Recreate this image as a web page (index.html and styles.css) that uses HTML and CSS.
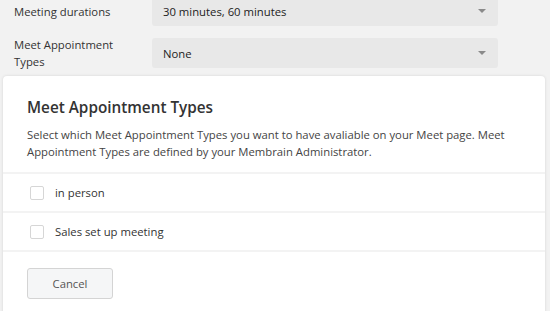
FILE: index.html
```html
<!DOCTYPE html>
<html>
<head>
<meta charset="utf-8">
<link rel="stylesheet" href="styles.css">
</head>
<body>
<div class="form">
  <div class="row">
    <div class="label">Meeting durations</div>
    <div class="select"><span>30 minutes, 60 minutes</span><span class="caret"></span></div>
  </div>
  <div class="row">
    <div class="label">Meet Appointment Types</div>
    <div class="select"><span>None</span><span class="caret"></span></div>
  </div>
</div>
<div class="modal">
  <div class="head">
    <h2 class="title">Meet Appointment Types</h2>
    <p class="desc">Select which Meet Appointment Types you want to have avaliable on your Meet page. Meet Appointment Types are defined by your Membrain Administrator.</p>
  </div>
  <label class="option"><span class="box"></span><span>in person</span></label>
  <label class="option"><span class="box"></span><span>Sales set up meeting</span></label>
  <div class="foot"><button class="btn">Cancel</button></div>
</div>
</body>
</html>
```
FILE: styles.css
```css
html, body {
  margin: 0;
  padding: 0;
  height: 100%;
  overflow: hidden;
}
body {
  background: #f2f2f2;
  font-family: "Open Sans", "Noto Sans", sans-serif;
  font-size: 11.3px;
  color: #333;
}
.form {
  margin-top: -4px;
  display: flex;
  flex-direction: column;
  gap: 10px;
}
.row {
  display: grid;
  grid-template-columns: 152px 346px;
  align-items: center;
}
.label {
  padding-left: 14px;
  width: 110px;
  line-height: 17px;
  color: #333;
}
.select {
  height: 30px;
  background: #e8e8e8;
  border-radius: 3px;
  display: flex;
  align-items: center;
  justify-content: space-between;
  padding: 0 12px 0 11px;
  color: #222;
}
.caret {
  width: 0;
  height: 0;
  border-left: 4px solid transparent;
  border-right: 4px solid transparent;
  border-top: 4px solid #8a8a8a;
}
.modal {
  margin: 6px 5px 0 3px;
  background: #fff;
  border-radius: 4px;
  box-shadow: 0 0 3px rgba(0,0,0,0.12);
  height: 300px;
}
.head {
  padding: 21px 24px 12px 24px;
  border-bottom: 2px solid #f3f3f3;
}
.title {
  margin: 0 0 9px 0;
  font-size: 15.3px;
  line-height: 20px;
  font-weight: 600;
  color: #333;
}
.desc {
  margin: 0;
  line-height: 17px;
  color: #444;
}
.option {
  display: flex;
  align-items: center;
  gap: 11px;
  height: 37px;
  padding-left: 27px;
  border-bottom: 2px solid #f3f3f3;
  color: #333;
}
.box {
  width: 12px;
  height: 12px;
  border: 1px solid #d6d6d6;
  border-radius: 2px;
  background: #fff;
}
.foot {
  padding: 16px 24px;
}
.btn {
  width: 86px;
  height: 31px;
  background: #f5f6f7;
  border: 1px solid #d4d4d4;
  border-radius: 3px;
  font-family: inherit;
  font-size: 11.3px;
  color: #555;
}
```
